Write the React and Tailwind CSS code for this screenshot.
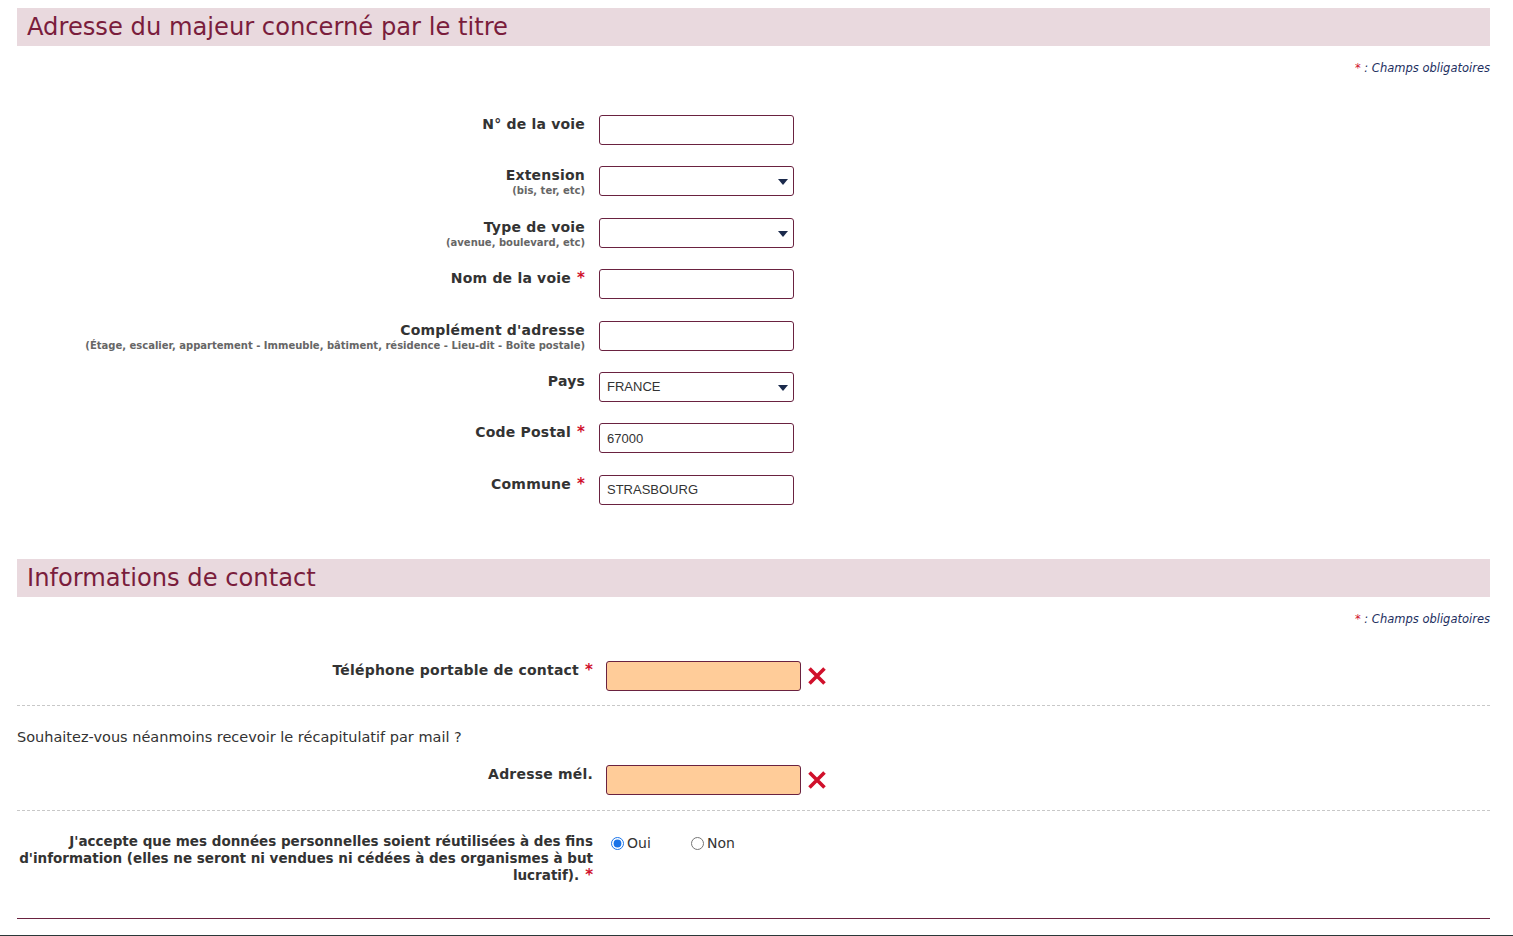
import React from "react";

const labelFont = { fontFamily: '"DejaVu Sans", Verdana, sans-serif' };

const Star = () => <span className="text-[#d0102b] text-[15px] leading-none ml-[6px]">*</span>;

const SectionTitle = ({ children }) => (
  <div className="h-[38px] bg-[#e9d9de] px-[10px] flex items-center text-[24.2px] text-[#7a1d3c] leading-none">
    {children}
  </div>
);

const RequiredNote = () => (
  <div className="text-right text-[11.5px] italic text-[#1d2f5f] leading-[13px]">
    <span className="text-[#d0102b]">*</span> : Champs obligatoires
  </div>
);

const Caret = () => (
  <svg width="10" height="6" viewBox="0 0 10 6" className="absolute right-[5px] top-[12px]">
    <path d="M0 0 L10 0 L5 6 Z" fill="#1b2a4c" />
  </svg>
);

const Field = ({ value = "", select, error }) => (
  <div
    className={`relative w-[195px] h-[30px] border border-[#6a2240] rounded-[3px] flex items-center px-[7px] text-[13px] text-[#333] ${
      error ? "bg-[#ffcc99]" : "bg-white"
    }`}
    style={{ fontFamily: '"Liberation Sans", Arial, sans-serif' }}
  >
    {value}
    {select && <Caret />}
  </div>
);

const ErrorMark = () => (
  <svg width="18" height="18" viewBox="0 0 18 18" className="ml-[7px] mt-[6px]">
    <path d="M1.5 1.5 L16.5 16.5 M16.5 1.5 L1.5 16.5" stroke="#d0102b" strokeWidth="3.6" />
  </svg>
);

const AddressRow = ({ label, sub, required, ...field }) => (
  <div className="flex h-[30px]">
    <div className="w-[568px] text-right pt-[1px]">
      <div className="text-[14px] tracking-[0.2px] font-bold leading-[16px] text-[#333]">
        {label}
        {required && <Star />}
      </div>
      {sub && <div className="mt-[2px] text-[10px] font-bold leading-[12px] text-[#666]">{sub}</div>}
    </div>
    <div className="ml-[14px]">
      <Field {...field} />
    </div>
  </div>
);

const ContactRow = ({ label, required }) => (
  <div className="flex">
    <div className="w-[576px] text-right pt-[1px] text-[14px] tracking-[0.2px] font-bold leading-[16px] text-[#333]">
      {label}
      {required && <Star />}
    </div>
    <div className="ml-[13px] flex items-start">
      <Field error />
      <ErrorMark />
    </div>
  </div>
);

const Radio = ({ label, checked }) => (
  <label className="flex items-center w-[80px] text-[14px] text-[#333]">
    <input type="radio" name="consent" defaultChecked={checked} className="ml-[5px] mr-[3px] w-[13px] h-[13px] accent-[#1a73e8]" />
    {label}
  </label>
);

export default function App() {
  return (
    <div className="bg-white min-h-[936px] pt-[8px]" style={labelFont}>
      <div className="pl-[17px] pr-[23px]">
        <SectionTitle>Adresse du majeur concerné par le titre</SectionTitle>
        <div className="mt-[16px]">
          <RequiredNote />
        </div>

        <div className="mt-[40px] flex flex-col gap-y-[21.4px]">
          <AddressRow label="N° de la voie" />
          <AddressRow label="Extension" sub="(bis, ter, etc)" select />
          <AddressRow label="Type de voie" sub="(avenue, boulevard, etc)" select />
          <AddressRow label="Nom de la voie" required />
          <AddressRow
            label="Complément d'adresse"
            sub="(Étage, escalier, appartement - Immeuble, bâtiment, résidence - Lieu-dit - Boîte postale)"
          />
          <AddressRow label="Pays" value="FRANCE" select />
          <AddressRow label="Code Postal" required value="67000" />
          <AddressRow label="Commune" required value="STRASBOURG" />
        </div>

        <div className="mt-[54px]">
          <SectionTitle>Informations de contact</SectionTitle>
        </div>
        <div className="mt-[16px]">
          <RequiredNote />
        </div>

        <div className="mt-[35px]">
          <ContactRow label="Téléphone portable de contact" required />
        </div>
        <div className="mt-[14px] border-t border-dashed border-[#c8c8c8]" />

        <div className="mt-[23px] text-[14.5px] leading-[16px] text-[#333]">
          Souhaitez-vous néanmoins recevoir le récapitulatif par mail ?
        </div>

        <div className="mt-[20px]">
          <ContactRow label="Adresse mél." />
        </div>
        <div className="mt-[15px] border-t border-dashed border-[#c8c8c8]" />

        <div className="mt-[22px] flex">
          <div className="w-[576px] text-right text-[13.5px] font-bold leading-[17px] text-[#333]">
            J'accepte que mes données personnelles soient réutilisées à des fins d'information (elles ne seront ni vendues ni cédées à des organismes à but lucratif).
            <Star />
          </div>
          <div className="ml-[13px] flex items-start">
            <Radio label="Oui" checked />
            <Radio label="Non" />
          </div>
        </div>

        <div className="mt-[34px] border-t border-[#6a2240]" />
      </div>
      <div className="mt-[16px] h-[1px] bg-[#2b3838]" />
    </div>
  );
}
